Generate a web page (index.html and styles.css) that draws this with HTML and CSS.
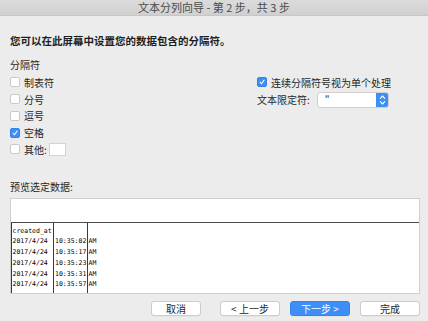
FILE: index.html
```html
<!DOCTYPE html>
<html lang="zh-CN">
<head>
<meta charset="utf-8">
<title>文本分列向导</title>
<link rel="stylesheet" href="styles.css">
</head>
<body>
<div class="window">
  <div class="titlebar">文本分列向导 - 第 2 步，共 3 步</div>
  <div class="content">
    <div class="intro">您可以在此屏幕中设置您的数据包含的分隔符。</div>
    <div class="group-label">分隔符</div>
    <div class="options">
      <div class="col-left">
        <label class="row"><span class="cb"></span><span>制表符</span></label>
        <label class="row"><span class="cb"></span><span>分号</span></label>
        <label class="row"><span class="cb"></span><span>逗号</span></label>
        <label class="row"><span class="cb checked"><svg viewBox="0 0 10 10" width="10" height="10"><path d="M2.6 5.3 L4.3 7.2 L7.6 2.6" fill="none" stroke="#fff" stroke-width="1.3" stroke-linecap="round" stroke-linejoin="round"/></svg></span><span>空格</span></label>
        <label class="row"><span class="cb"></span><span>其他:</span><span class="other-input"></span></label>
      </div>
      <div class="col-right">
        <label class="row"><span class="cb checked"><svg viewBox="0 0 10 10" width="10" height="10"><path d="M2.6 5.3 L4.3 7.2 L7.6 2.6" fill="none" stroke="#fff" stroke-width="1.3" stroke-linecap="round" stroke-linejoin="round"/></svg></span><span>连续分隔符号视为单个处理</span></label>
        <div class="qualifier">
          <span>文本限定符:</span>
          <div class="select">
            <span class="select-value">"</span>
            <span class="stepper"><svg viewBox="0 0 13 16" width="13" height="16"><path d="M4.3 6.3 L6.5 4 L8.7 6.3 M4.3 9.7 L6.5 12 L8.7 9.7" fill="none" stroke="#fff" stroke-width="1.1" stroke-linecap="round" stroke-linejoin="round"/></svg></span>
          </div>
        </div>
      </div>
    </div>
    <div class="preview-label">预览选定数据:</div>
    <div class="preview">
      <div class="preview-top"></div>
      <div class="table">
        <div class="tcol c1">
          <div>created_at</div>
          <div>2017/4/24</div>
          <div>2017/4/24</div>
          <div>2017/4/24</div>
          <div>2017/4/24</div>
          <div>2017/4/24</div>
        </div>
        <div class="tcol c2">
          <div>&nbsp;</div>
          <div>10:35:02</div>
          <div>10:35:17</div>
          <div>10:35:23</div>
          <div>10:35:31</div>
          <div>10:35:57</div>
        </div>
        <div class="tcol c3">
          <div>&nbsp;</div>
          <div>AM</div>
          <div>AM</div>
          <div>AM</div>
          <div>AM</div>
          <div>AM</div>
        </div>
      </div>
    </div>
    <div class="buttons">
      <button class="btn cancel">取消</button>
      <button class="btn">&lt; 上一步</button>
      <button class="btn primary">下一步 &gt;</button>
      <button class="btn">完成</button>
    </div>
  </div>
</div>
</body>
</html>
```

FILE: styles.css
```css
* { box-sizing: border-box; }
html, body { margin: 0; padding: 0; }
body {
  width: 428px;
  height: 321px;
  overflow: hidden;
  background: #ececec;
  font-family: "Noto Sans CJK SC", "Noto Sans", sans-serif;
  color: #262626;
}
.window { width: 428px; height: 321px; }
.titlebar {
  height: 16px;
  line-height: 15px;
  text-align: center;
  font-size: 11px;
  color: #4a4a4a;
  background: linear-gradient(#dbdbdb, #d0d0d0);
  border-bottom: 1px solid #c6c6c6;
}
.content { padding: 0 8px 0 10px; }
.intro {
  margin-top: 18px;
  height: 14px;
  line-height: 14px;
  font-size: 10.5px;
  font-weight: bold;
  color: #1e1e1e;
}
.group-label {
  margin-top: 10px;
  height: 14px;
  line-height: 14px;
  font-size: 10px;
}
.options {
  margin-top: 2px;
  display: grid;
  grid-template-columns: 247px 1fr;
}
.row {
  display: flex;
  align-items: center;
  height: 16.75px;
  font-size: 10px;
  gap: 4px;
}
.cb {
  width: 10px;
  height: 10px;
  border: 1px solid #c9c9c9;
  border-radius: 2px;
  background: #fff;
  display: inline-flex;
  align-items: center;
  justify-content: center;
  flex: none;
}
.cb.checked {
  background: #3d8ff6;
  border-color: #3482ea;
}
.cb svg { display: block; }
.other-input {
  width: 17px;
  height: 13px;
  background: #fff;
  border: 1px solid #d3d3d3;
  margin-left: -2px;
}
.qualifier {
  display: flex;
  align-items: center;
  gap: 7px;
  font-size: 10px;
  height: 16px;
  margin-top: 1px;
}
.select {
  width: 72px;
  height: 16px;
  background: #fff;
  border: 1px solid #d0d0d0;
  border-radius: 3px;
  display: flex;
  justify-content: space-between;
  align-items: stretch;
  overflow: hidden;
}
.select-value {
  padding-left: 7px;
  line-height: 14px;
  font-size: 10px;
}
.stepper {
  width: 13px;
  margin: -1px -1px -1px 0;
  background: #3d8ff6;
  border-radius: 0 3px 3px 0;
  display: flex;
  align-items: center;
}
.preview-label {
  margin-top: 22px;
  height: 14px;
  line-height: 14px;
  font-size: 10px;
}
.preview {
  margin-top: 4px;
  width: 410px;
  height: 96px;
  background: #fff;
  border: 1px solid #cfcfcf;
  display: flex;
  flex-direction: column;
}
.preview-top { height: 23px; flex: none; }
.table {
  flex: 1;
  display: grid;
  grid-template-columns: 42px 34px 1fr;
  border-top: 1px solid #4a4a4a;
}
.tcol {
  border-left: 1px solid #3a3a3a;
  padding-top: 3px;
  font-family: "DejaVu Sans Mono", "Liberation Mono", monospace;
  font-size: 6.5px;
  color: #000;
  white-space: nowrap;
  overflow: hidden;
}
.tcol div { height: 10.7px; line-height: 10.7px; padding-left: 0.5px; }
.c2 div { padding-left: 1px; }
.buttons {
  margin-top: 7px;
  display: flex;
  justify-content: flex-end;
  gap: 10px;
  padding-right: 0;
}
.btn {
  width: 60px;
  height: 15px;
  padding: 0;
  border: 1px solid #cdcdcd;
  border-radius: 3px;
  background: #fff;
  font-family: "Noto Sans CJK SC", "Noto Sans", sans-serif;
  font-size: 10px;
  line-height: 13px;
  color: #262626;
  text-align: center;
  box-shadow: 0 0.5px 0 rgba(0,0,0,0.06);
}
.btn.cancel { width: 50px; margin-right: 9px; }
.btn.primary {
  background: #3d8ff6;
  border-color: #3484ee;
  color: #fff;
}
```
